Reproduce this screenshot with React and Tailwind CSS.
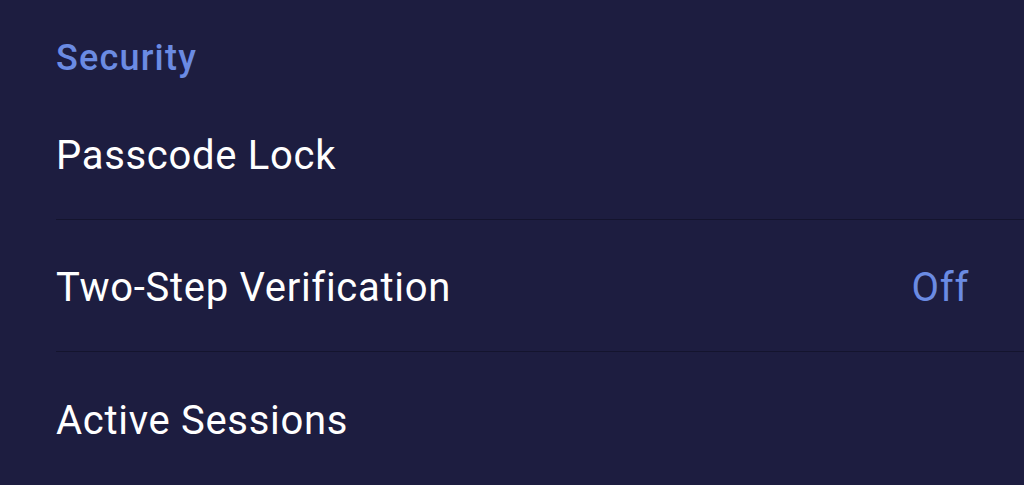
import React from "react";

function Row({ label, value, last }) {
  return (
    <div className="pl-[56px]">
      <div
        className={
          "h-[132px] pt-[5px] flex items-center justify-between pr-[55px] " +
          (last ? "" : "border-b border-[#14142e]")
        }
      >
        <span className="text-[40px] leading-[48px] text-white tracking-[0.7px]">{label}</span>
        {value && (
          <span className="text-[40px] leading-[48px] text-[#6b8be3] tracking-[0.7px]">{value}</span>
        )}
      </div>
    </div>
  );
}

export default function App() {
  return (
    <div
      className="w-[1024px] h-[485px] overflow-hidden bg-[#1d1d40]"
      style={{ fontFamily: "Roboto, 'Noto Sans', sans-serif" }}
    >
      <div className="h-[88px] pl-[56px] pt-[34px]">
        <span className="block text-[36px] leading-[48px] font-medium text-[#6b8be3] tracking-[1.2px]">Security</span>
      </div>
      <Row label="Passcode Lock" />
      <Row label="Two-Step Verification" value="Off" />
      <Row label="Active Sessions" last />
    </div>
  );
}
